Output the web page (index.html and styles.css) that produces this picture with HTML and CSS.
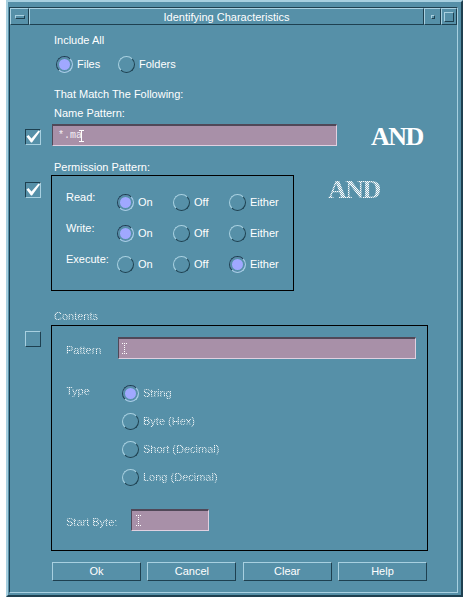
FILE: index.html
```html
<!DOCTYPE html>
<html>
<head>
<meta charset="utf-8">
<title>Identifying Characteristics</title>
<link rel="stylesheet" href="styles.css">
</head>
<body>
<svg class="defs" width="0" height="0" aria-hidden="true">
  <defs>
    <pattern id="stip" width="2" height="2" patternUnits="userSpaceOnUse">
      <rect x="0" y="0" width="1" height="1" fill="#fff"/>
      <rect x="1" y="1" width="1" height="1" fill="#fff"/>
    </pattern>
  </defs>
</svg>
<div class="window">
  <div class="inner">
    <div class="titlebar">
      <div class="tb-btn tb-menu"><span class="menu-bar"></span></div>
      <div class="tb-btn tb-title">Identifying Characteristics</div>
      <div class="tb-btn tb-min"><span class="min-dot"></span></div>
      <div class="tb-btn tb-max"><span class="max-box"></span></div>
    </div>
    <div class="content">
      <div class="label lbl-include">Include All</div>
      <div class="scope">
        <span class="radio w-files"><span class="dot on"></span>Files</span>
        <span class="radio"><span class="dot"></span>Folders</span>
      </div>
      <div class="label lbl-match">That Match The Following:</div>
      <div class="label lbl-name">Name Pattern:</div>
      <div class="crit-row name-row">
        <span class="check checked"><svg width="14" height="14" viewBox="1 1 14 14"><polygon points="1.5,7.5 3.5,6 6.5,9.5 13.5,1.5 15,2.5 7,13.5 6,13.5" fill="#fff"/></svg></span>
        <div class="field name-field"><span class="mono">*.ma</span><svg class="ibeam" width="5" height="12" viewBox="0 0 5 12"><rect x="0" y="0" width="5" height="1" fill="#fff"/><rect x="2" y="0" width="1" height="12" fill="#fff"/><rect x="0" y="11" width="5" height="1" fill="#fff"/></svg></div>
        <div class="and">AND</div>
      </div>
      <div class="label lbl-perm">Permission Pattern:</div>
      <div class="crit-row perm-row">
        <span class="check checked"><svg width="14" height="14" viewBox="1 1 14 14"><polygon points="1.5,7.5 3.5,6 6.5,9.5 13.5,1.5 15,2.5 7,13.5 6,13.5" fill="#fff"/></svg></span>
        <div class="perm-box">
          <div class="p-row">
            <span class="p-label">Read:</span>
            <span class="radio opt"><span class="dot on"></span>On</span>
            <span class="radio opt"><span class="dot"></span>Off</span>
            <span class="radio opt"><span class="dot"></span>Either</span>
          </div>
          <div class="p-row">
            <span class="p-label">Write:</span>
            <span class="radio opt"><span class="dot on"></span>On</span>
            <span class="radio opt"><span class="dot"></span>Off</span>
            <span class="radio opt"><span class="dot"></span>Either</span>
          </div>
          <div class="p-row">
            <span class="p-label">Execute:</span>
            <span class="radio opt"><span class="dot"></span>On</span>
            <span class="radio opt"><span class="dot"></span>Off</span>
            <span class="radio opt"><span class="dot on"></span>Either</span>
          </div>
        </div>
        <div class="and and-off stip">AND</div>
      </div>
      <div class="label lbl-contents stip">Contents</div>
      <div class="crit-row contents-row">
        <span class="check"></span>
        <div class="contents-box">
          <div class="c-row pattern-row">
            <span class="c-label w-pattern stip">Pattern</span>
            <div class="field pattern-field"><svg class="ibeam-off" width="5" height="11" viewBox="0 0 5 11"><rect x="0" y="0" width="5" height="1" fill="url(#stip)"/><rect x="2" y="0" width="1" height="11" fill="url(#stip)"/><rect x="0" y="10" width="5" height="1" fill="url(#stip)"/></svg></div>
          </div>
          <div class="c-row type-row">
            <span class="c-label w-type stip">Type</span>
            <div class="type-list">
              <span class="radio"><span class="dot on"></span><span class="stip">String</span></span>
              <span class="radio"><span class="dot"></span><span class="stip">Byte (Hex)</span></span>
              <span class="radio"><span class="dot"></span><span class="stip">Short (Decimal)</span></span>
              <span class="radio"><span class="dot"></span><span class="stip">Long (Decimal)</span></span>
            </div>
          </div>
          <div class="c-row start-row">
            <span class="c-label w-start stip">Start Byte:</span>
            <div class="field start-field"><svg class="ibeam-off" width="5" height="11" viewBox="0 0 5 11"><rect x="0" y="0" width="5" height="1" fill="url(#stip)"/><rect x="2" y="0" width="1" height="11" fill="url(#stip)"/><rect x="0" y="10" width="5" height="1" fill="url(#stip)"/></svg></div>
          </div>
        </div>
      </div>
      <div class="buttons">
        <div class="btn">Ok</div>
        <div class="btn">Cancel</div>
        <div class="btn">Clear</div>
        <div class="btn">Help</div>
      </div>
    </div>
  </div>
</div>
</body>
</html>
```
FILE: styles.css
```css
* { box-sizing: border-box; }
html, body { margin: 0; padding: 0; background: #ffffff; }
body {
  font-family: "Liberation Sans", Arial, sans-serif;
  font-size: 11px;
  line-height: 13px;
  color: #ffffff;
}
.defs { position: absolute; width: 0; height: 0; }

.window {
  width: 457px;
  height: 597px;
  margin-left: 6px;
  background: #5690a8;
  border: 2px solid;
  border-color: #a8d0e0 #1e4050 #1e4050 #a8d0e0;
  padding: 5px 3px 2px 1px;
}
.inner {
  height: 100%;
  border: 1px solid;
  border-color: #1e4050 #a8d0e0 #a8d0e0 #1e4050;
}

/* title bar */
.titlebar { display: flex; height: 17px; }
.tb-btn {
  border: 1px solid;
  border-color: #a8d0e0 #1e4050 #1e4050 #a8d0e0;
  display: flex;
  align-items: center;
  justify-content: center;
}
.tb-menu { width: 19px; }
.tb-title { flex: 1; padding-top: 1px; }
.tb-min { width: 17px; }
.tb-max { width: 16px; }
.menu-bar {
  width: 10px; height: 4px;
  border: 1px solid;
  border-color: #a8d0e0 #1e4050 #1e4050 #a8d0e0;
}
.min-dot {
  width: 4px; height: 4px;
  border: 1px solid;
  border-color: #a8d0e0 #1e4050 #1e4050 #a8d0e0;
}
.max-box {
  width: 10px; height: 10px;
  border: 1px solid;
  border-color: #a8d0e0 #1e4050 #1e4050 #a8d0e0;
}

/* content */
.content { padding: 9px 0 0 15px; }
.label { margin-left: 29px; height: 13px; }
.lbl-match { margin-top: 15px; }
.lbl-name { margin-top: 6px; }
.lbl-perm { margin-top: 15px; }
.lbl-contents { margin-top: 19px; width: max-content; }

.stip {
  color: transparent;
  background-image: repeating-conic-gradient(#ffffff 0 25%, rgba(255,255,255,0.3) 0 50%);
  background-size: 2px 2px;
  -webkit-background-clip: text;
  background-clip: text;
}

.scope { display: flex; margin: 9px 0 0 31px; height: 17px; }
.w-files { width: 62px; }

.radio { display: flex; align-items: center; gap: 4px; height: 17px; white-space: nowrap; }
.dot {
  flex: none;
  width: 17px; height: 17px;
  border-radius: 50%;
  border: 1px solid;
  border-color: #a8d0e0 #1e4050 #1e4050 #a8d0e0;
}
.dot.on {
  border-color: #1e4050 #a8d0e0 #a8d0e0 #1e4050;
  background: #a0a8ff;
  box-shadow: inset 0 0 0 2px #5690a8;
}

.check {
  flex: none;
  width: 16px; height: 16px;
  border: 1px solid;
  border-color: #a8d0e0 #1e4050 #1e4050 #a8d0e0;
  display: block;
}
.check svg { display: block; }
.check.checked { border-color: #1e4050 #a8d0e0 #a8d0e0 #1e4050; }

.crit-row { display: flex; align-items: flex-start; }
.name-row { margin-top: 4px; height: 22px; }
.name-row .check { margin-top: 5px; }
.perm-row { margin-top: 1px; height: 116px; }
.perm-row .check { margin-top: 7px; }
.contents-row { margin-top: 2px; height: 226px; }
.contents-row .check { margin-top: 6px; }

.field {
  background: #a890a8;
  border: 1px solid;
  border-color: #504858 #e0d0e0 #e0d0e0 #504858;
  border-top-width: 2px;
  display: flex;
  align-items: center;
}
.name-field { width: 285px; height: 22px; margin-left: 11px; padding-left: 5px; }
.mono {
  font-family: "Liberation Mono", "Courier New", monospace;
  font-size: 10px;
  line-height: 12px;
  color: #f4eef4;
}
.ibeam { margin-left: -3px; }

.and {
  font-family: "Liberation Serif", "Times New Roman", serif;
  font-weight: bold;
  font-size: 26px;
  line-height: 26px;
  height: 22px;
  letter-spacing: -1.5px;
  margin-left: 34px;
}
.and-off { margin-top: 2px; }

.perm-box {
  width: 243px;
  height: 116px;
  margin-left: 10px;
  border: 1px solid #000;
  padding: 15px 0 0 14px;
}
.p-row { display: flex; align-items: flex-start; height: 31px; }
.p-label { width: 51px; }
.opt { width: 56px; margin-top: 3px; }

.contents-box {
  width: 377px;
  height: 226px;
  margin-left: 10px;
  border: 1px solid #000;
  padding: 11px 0 0 14px;
}
.c-row { display: flex; align-items: flex-start; }
.c-label { flex: none; }
.w-pattern { width: 52px; margin-top: 7px; }
.pattern-field { width: 298px; height: 22px; padding-left: 3px; }
.type-row { margin-top: 26px; }
.w-type { width: 56px; }
.type-list { display: flex; flex-direction: column; gap: 11px; }
.start-row { margin-top: 23px; }
.w-start { width: 65px; margin-top: 7px; }
.start-field { width: 78px; height: 22px; padding-left: 4px; }

.buttons {
  display: flex;
  justify-content: space-between;
  width: 375px;
  margin: 11px 0 0 27px;
}
.btn {
  width: 89px;
  height: 19px;
  border: 1px solid;
  border-color: #a8d0e0 #1e4050 #1e4050 #a8d0e0;
  text-align: center;
  line-height: 17px;
}
```
